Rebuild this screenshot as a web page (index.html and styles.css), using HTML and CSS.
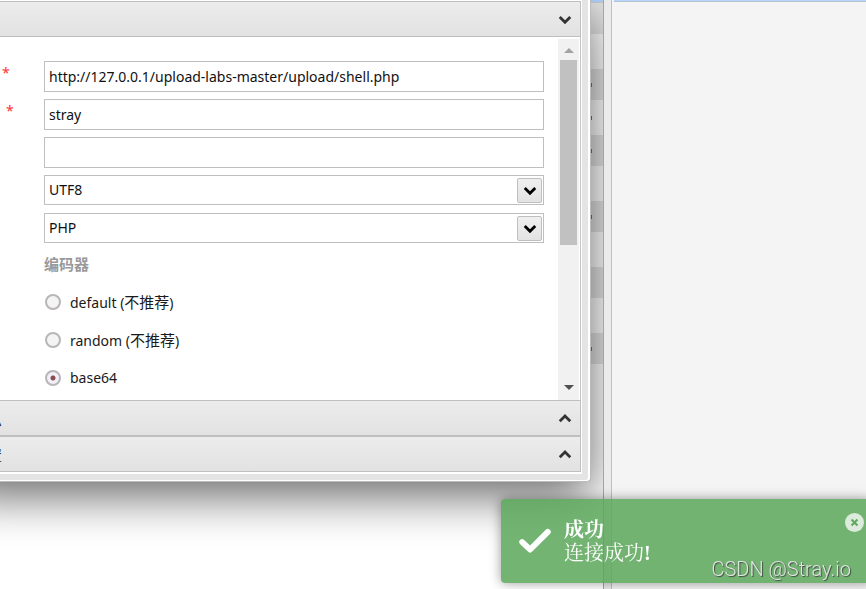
FILE: index.html
```html
<!DOCTYPE html>
<html lang="zh">
<head>
<meta charset="utf-8">
<title>添加数据</title>
<link rel="stylesheet" href="styles.css">
</head>
<body>
<div class="workspace">
  <main class="list-pane">
    <div class="rows" aria-hidden="true">
      <div class="row head"></div>
      <div class="row odd"></div><div class="row"></div>
      <div class="row odd mark"></div><div class="row mark"></div>
      <div class="row odd mark"></div><div class="row"></div>
      <div class="row odd mark"></div><div class="row"></div>
      <div class="row odd"></div><div class="row"></div>
      <div class="row odd mark"></div>
    </div>
    <section class="dialog">
      <div class="dialog-body">
        <button class="section-bar" type="button" aria-label="基础配置" aria-expanded="true">
          <span class="bar-text"></span>
          <svg class="chevron" viewBox="0 0 12 10"><path d="M1.500 2.500 6 7l4.500-4.500"/></svg>
        </button>
        <form class="form">
          <div class="fields">
            <div class="field"><label class="label" for="url"><span class="star">*</span></label><input class="box" id="url" type="text" value="http://127.0.0.1/upload-labs-master/upload/shell.php"></div>
            <div class="field"><label class="label wide" for="pwd"><span class="star">*</span></label><input class="box" id="pwd" type="text" value="stray"></div>
            <div class="field"><label class="label" for="note"></label><input class="box" id="note" type="text" value="" aria-label="网站备注"></div>
            <div class="field"><label class="label" for="enc"></label><span class="pick"><select class="box" id="enc" aria-label="编码设置"><option>UTF8</option></select><span class="pick-icon"><svg class="chevron" viewBox="0 0 12 10"><path d="M1.500 2.500 6 7l4.500-4.500"/></svg></span></span></div>
            <div class="field"><label class="label" for="type"></label><span class="pick"><select class="box" id="type" aria-label="连接类型"><option>PHP</option></select><span class="pick-icon"><svg class="chevron" viewBox="0 0 12 10"><path d="M1.500 2.500 6 7l4.500-4.500"/></svg></span></span></div>
            <div class="options">
              <div class="field group-title">编码器</div>
              <label class="field radio"><input type="radio" name="encoder"><span>default (<span class="han">不推荐</span>)</span></label>
              <label class="field radio"><input type="radio" name="encoder"><span>random (<span class="han">不推荐</span>)</span></label>
              <label class="field radio"><input type="radio" name="encoder" checked><span>base64</span></label>
            </div>
          </div>
          <div class="scroll">
            <svg class="arrow up" viewBox="0 0 10 5"><path d="M5 0 10 5H0z"/></svg>
            <div class="thumb"></div>
            <svg class="arrow" viewBox="0 0 10 5"><path d="M0 0h10L5 5z"/></svg>
          </div>
        </form>
        <button class="section-bar" type="button">
          <span class="bar-text">请求信息</span>
          <svg class="chevron" viewBox="0 0 12 10"><path d="M1.500 7 6 2.500 10.500 7"/></svg>
        </button>
        <button class="section-bar" type="button">
          <span class="bar-text">其他设置</span>
          <svg class="chevron" viewBox="0 0 12 10"><path d="M1.500 7 6 2.500 10.500 7"/></svg>
        </button>
      </div>
    </section>
  </main>
  <div class="divider"></div>
  <aside class="side-pane"><div class="side-head"></div></aside>
</div>
<div class="toast" role="status">
  <svg class="tick" viewBox="0 0 30 24"><path d="M3 13l7.500 7L27 3.500"/></svg>
  <div class="toast-text"><strong>成功</strong><span>连接成功<b>!</b></span></div>
  <button class="close" type="button" aria-label="关闭"><svg viewBox="0 0 18 18"><circle cx="9" cy="9" r="9"/><path d="M6.200 6.200l5.600 5.600M11.800 6.200l-5.600 5.600"/></svg></button>
</div>
<div class="watermark">CSDN @Stray.io</div>
</body>
</html>
```
FILE: styles.css
```css
* { box-sizing: border-box; }

body {
  margin: 0;
  overflow: hidden;
  background: #fff;
  color: #1a1a1a;
  font: 14px/20px "Noto Sans", "Noto Sans CJK SC", sans-serif;
}

.workspace {
  display: grid;
  grid-template-columns: minmax(0, 1fr) 9px 254px;
  height: 100vh;
}

.list-pane { position: relative; overflow: hidden; }

.row { height: 35px; }
.row.odd { height: 31px; background: #e6e6e6; }
.row.head { height: 3px; background: #b4d5ff; border-bottom: 1px solid #ccc; }
.row.mark { display: flex; align-items: center; justify-content: flex-end; padding-right: 11px; }
.row.mark::before { content: ""; width: 2px; height: 4px; background: #777; }

.divider {
  background: #ebebeb;
  border: solid #c0c0c0;
  border-width: 0 1px;
  border-left-color: #a4a4a4;
}

.side-pane { background: #f4f4f4; padding-left: 2px; }
.side-head { height: 2px; background: #b4d5ff; border-bottom: 1px solid #b9c3cf; }

/* Window frame */
.dialog {
  position: absolute;
  top: 0;
  left: -40px;
  right: 12px;
  padding-left: 40px;
  padding-right: 7px;
  padding-bottom: 7px;
  background: #e4e4e4;
  border: solid #bbb;
  border-width: 0 1px 1px 0;
  border-bottom-right-radius: 4px;
  box-shadow: inset -2px -1px 0 #fff, 0 14px 48px rgba(0, 0, 0, .6);
}

.dialog-body {
  margin-right: 1px;
  padding: 1px 1px 2px 0;
  background: #fff;
}

.section-bar {
  display: flex;
  align-items: center;
  justify-content: space-between;
  width: 100%;
  height: 36px;
  padding: 2px 8px 0 0;
  border: 1px solid #bfbfbf;
  border-left: 0;
  background: linear-gradient(#ececec, #e2e2e2);
  color: #222;
  font: 15px/20px "Noto Sans CJK SC", sans-serif;
}

.bar-text {
  display: flex;
  justify-content: flex-end;
  width: 2px;
  overflow: hidden;
  white-space: nowrap;
}

.chevron { width: 14px; height: 12px; fill: none; stroke: #333; stroke-width: 2.4; }

/* Form */
.form {
  display: flex;
  justify-content: space-between;
  height: 363px;
  padding-top: 2px;
  padding-right: 1px;
  border-right: 1px solid #c4c4c4;
  overflow: hidden;
}

.fields { flex: 1; padding-top: 18px; margin-right: 14px; }
.field { display: flex; align-items: center; height: 38px; }
.label { width: 44px; flex: none; padding: 0 0 6px 2px; }
.label.wide { padding-left: 6px; }
.star { color: #f33; }

.box {
  flex: 1;
  width: 100%;
  height: 31px;
  margin: 0;
  padding: 0 4px;
  border: 1px solid #bfbfbf;
  border-radius: 0;
  background: #fff;
  color: #111;
  font: inherit;
  appearance: none;
}

.pick { position: relative; display: flex; flex: 1; }
.pick .box { height: 30px; }
.pick-icon {
  position: absolute;
  top: 3px;
  right: 2px;
  display: grid;
  place-items: center;
  width: 25px;
  height: 25px;
  border: 1px solid #bfbfbf;
  border-radius: 2px;
  background: linear-gradient(#efefef, #e3e3e3);
  pointer-events: none;
}
.pick .chevron { stroke: #000; }

.options { margin-top: -2px; }
.group-title { padding-left: 44px; color: #999; font-size: 15px; font-weight: 700; }
.radio { padding-left: 45px; gap: 9px; }
.radio .han { font-size: 15px; }
.radio input {
  appearance: none;
  width: 16px;
  height: 16px;
  margin: 0;
  border: 2px solid #b9b5b9;
  border-radius: 50%;
  background: #f4f4f4;
}
.radio input:checked { background: radial-gradient(circle, #8d4a50 0 2px, #f0f0f6 3px); }

.scroll {
  display: flex;
  flex-direction: column;
  align-items: center;
  width: 21px;
  padding: 9px 0 10px;
  background: #f1f1f1;
}
.arrow { width: 10px; height: 5px; fill: #505050; }
.arrow.up { fill: #a3a3a3; }
.thumb { width: 17px; height: 185px; margin: 7px 0 auto; background: #c1c1c1; }

/* Notification */
.toast {
  position: fixed;
  right: -6px;
  bottom: 6px;
  display: flex;
  align-items: center;
  width: 371px;
  height: 84px;
  padding-left: 18px;
  border-radius: 4px;
  background: rgba(91, 167, 91, .85);
  box-shadow: 0 0 12px rgba(0, 0, 0, .4);
  color: #fff;
  font: 20px/23px "Liberation Serif", "Noto Serif CJK SC", "Noto Sans CJK SC", serif;
}
.tick { width: 32px; height: 26px; fill: none; stroke: #fff; stroke-width: 5.5; stroke-linecap: round; stroke-linejoin: round; }
.toast-text { display: flex; flex-direction: column; margin-left: 13px; padding-top: 1px; }
.close {
  position: absolute;
  top: 14px;
  right: 8px;
  width: 19px;
  height: 19px;
  padding: 0;
  border: 0;
  background: none;
}
.close svg { display: block; fill: #dcebdc; stroke: none; }
.close path { fill: none; stroke: #62a862; stroke-width: 2; }

.watermark {
  position: fixed;
  right: 15px;
  bottom: 8px;
  color: #dfe5df;
  font: 300 20px/24px Roboto, "Liberation Sans", sans-serif;
  text-shadow: 1px 1px 1px #444;
}
```
